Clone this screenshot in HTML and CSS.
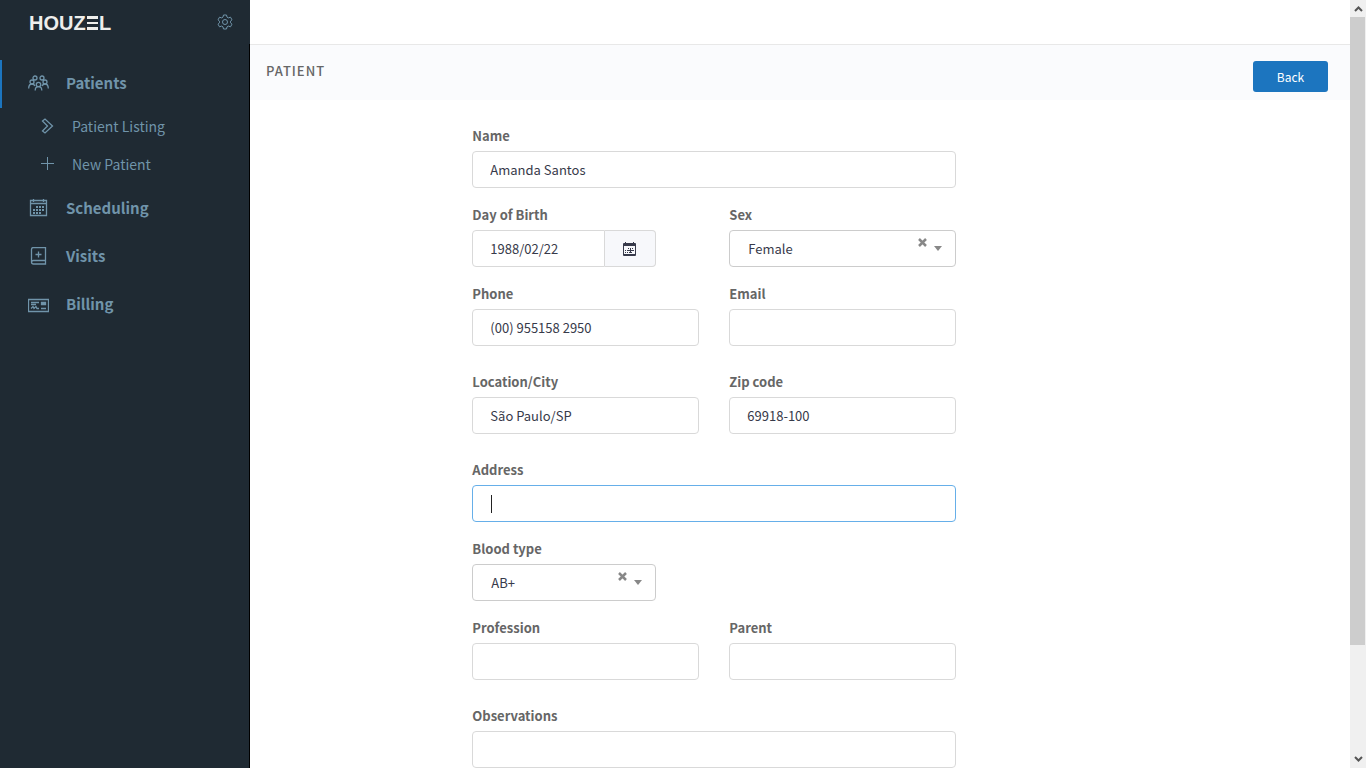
FILE: index.html
```
<!DOCTYPE html>
<html lang="en">
<head>
    <meta charset="UTF-8">
    <meta name="viewport" content="width=device-width, initial-scale=1.0">
    <title>Houzel - Patient</title>
    <link rel="stylesheet" href="styles.css">
</head>
<body>
    <aside class="sidebar">
        <div class="brand">
            <a class="logo" href="#">HOUZ<span class="bars">E</span>L</a>
            <button class="settings" type="button" aria-label="Settings">
                <svg width="16" height="16" viewBox="0 0 16 16">
                    <path d="M6.5 1h3l.5 2.1 1.400.8 2.100-.7 1.500 2.600L13.500 7.200v1.600l1.500 1.400-1.500 2.600-2.100-.7-1.400.8-.5 2.100h-3L6 12.900l-1.400-.8-2.100.7L1 10.200l1.500-1.400V7.200L1 5.800l1.500-2.600 2.100.7L6 3.100z"/>
                    <circle cx="8" cy="8" r="2.500"/>
                </svg>
            </button>
        </div>
        <nav class="menu">
            <a class="item active" href="#">
                <svg class="thick" width="21" height="16" viewBox="0 0 21 16">
                    <circle cx="7" cy="3" r="2"/>
                    <circle cx="14" cy="3" r="2"/>
                    <circle cx="4" cy="7" r="2"/>
                    <circle cx="17" cy="7" r="2"/>
                    <circle cx="10.500" cy="9.500" r="2.200"/>
                    <path d="M.7 13.500c0-3 1.200-4.500 3.300-4.500 1.500 0 2.500.8 3 2M20.300 13.500c0-3-1.200-4.500-3.300-4.500-1.500 0-2.500.8-3 2M7.200 15.500c0-2.400 1-3.800 3.300-3.800s3.300 1.400 3.300 3.800"/>
                </svg>
                Patients
            </a>
            <a class="subitem" href="#">
                <svg class="thick" width="14" height="16" viewBox="0 0 14 16">
                    <path d="M1.500 3L4 1l7.500 7L4 15l-2.500-2 5-5z"/>
                </svg>
                Patient Listing
            </a>
            <a class="subitem" href="#">
                <svg width="14" height="14" viewBox="0 0 14 14">
                    <path d="M6.500 0v13M0 6.500h13"/>
                </svg>
                New Patient
            </a>
            <a class="item" href="#">
                <svg class="thick" width="21" height="18" viewBox="0 0 21 18">
                    <path d="M2.500 1.500h16v15h-16zM2.500 4.500h16M5.500 0v3M15.500 0v3"/>
                    <path class="dots" d="M8 8h9M5 11h12M5 14h9"/>
                </svg>
                Scheduling
            </a>
            <a class="item" href="#">
                <svg class="thick" width="21" height="18" viewBox="0 0 21 18">
                    <path d="M17.500 13.500V.5H5.500Q3.500.5 3.500 2.500v12.500q0 2 2 2h12v-3.500H5.500q-2 0-2 2M10.500 4.500v6M7.500 7.500h6"/>
                </svg>
                Visits
            </a>
            <a class="item" href="#">
                <svg class="thick" width="21" height="18" viewBox="0 0 21 18">
                    <path d="M.5 4.500h20v12H.5zM3 7.500h8M3 9.500h5M3 13.500l2-2 1 2 2-2 1 2h2M13 13.500h5"/>
                    <path class="solid" d="M13.500 7.500h4v2h-4z"/>
                </svg>
                Billing
            </a>
        </nav>
    </aside>

    <main class="content">
        <div class="topbar"></div>
        <header class="page-header">
            <h1>PATIENT</h1>
            <button class="back" type="button">Back</button>
        </header>
        <form class="patient-form">
            <div class="fields">
                <div class="field full">
                    <label for="name">Name</label>
                    <input id="name" type="text" value="Amanda Santos">
                </div>

                <div class="field short">
                    <label for="birth">Day of Birth</label>
                    <div class="date">
                        <input id="birth" type="text" value="1988/02/22">
                        <button type="button" aria-label="Open calendar">
                            <svg width="14" height="14" viewBox="0 0 14 14">
                                <path d="M.5 1.500h12v12H.5zM.5 2.500h12M0 3.500h13M2.500 0v2M10.500 0v2M.5 12.500h12"/>
                                <path class="cells" d="M5 6.500h6M2 8.500h9M2 10.500h7"/>
                                <path d="M7.500 6v5M5 8.500h5"/>
                            </svg>
                        </button>
                    </div>
                </div>
                <div class="field right">
                    <label for="sex">Sex</label>
                    <div class="select">
                        <select id="sex">
                            <option>Female</option>
                            <option>Male</option>
                        </select>
                        <button class="clear" type="button" aria-label="Clear sex">
                            <svg width="9" height="9" viewBox="0 0 9 9"><path d="M1 1l7 7M8 1L1 8"/></svg>
                        </button>
                    </div>
                </div>

                <div class="field half spaced">
                    <label for="phone">Phone</label>
                    <input id="phone" type="text" value="(00) 955158 2950">
                </div>
                <div class="field right spaced">
                    <label for="email">Email</label>
                    <input id="email" type="email">
                </div>

                <div class="field half spaced">
                    <label for="city">Location/City</label>
                    <input id="city" type="text" value="São Paulo/SP">
                </div>
                <div class="field right spaced">
                    <label for="zip">Zip code</label>
                    <input id="zip" type="text" value="69918-100">
                </div>

                <div class="field full typing">
                    <label for="address">Address</label>
                    <input id="address" type="text" autofocus>
                </div>

                <div class="field short">
                    <label for="blood">Blood type</label>
                    <div class="select">
                        <select id="blood">
                            <option>AB+</option>
                            <option>AB-</option>
                            <option>O+</option>
                        </select>
                        <button class="clear" type="button" aria-label="Clear blood type">
                            <svg width="9" height="9" viewBox="0 0 9 9"><path d="M1 1l7 7M8 1L1 8"/></svg>
                        </button>
                    </div>
                </div>

                <div class="field half spaced">
                    <label for="profession">Profession</label>
                    <input id="profession" type="text">
                </div>
                <div class="field right spaced">
                    <label for="parent">Parent</label>
                    <input id="parent" type="text">
                </div>

                <div class="field full">
                    <label for="observations">Observations</label>
                    <input id="observations" type="text">
                </div>
            </div>
        </form>
    </main>

    <div class="scrollbar">
        <svg width="9" height="6" viewBox="0 0 9 6"><path d="M1 5l3.500-3.500L8 5"/></svg>
        <div class="track"><div class="thumb"></div></div>
        <svg width="9" height="6" viewBox="0 0 9 6"><path d="M1 1l3.500 3.500L8 1"/></svg>
    </div>
</body>
</html>
```
FILE: styles.css
```
* {
    box-sizing: border-box;
}

body {
    margin: 0;
    display: flex;
    height: 100vh;
    overflow: hidden;
    font-family: "Noto Sans CJK JP", "Open Sans", sans-serif;
    font-size: 14px;
    line-height: 20px;
    color: #373a4a;
    background-color: #fff;
}

svg {
    display: block;
    fill: none;
    stroke: currentColor;
    flex: none;
}

a {
    text-decoration: none;
}

button {
    padding: 0;
    border: 0;
    cursor: pointer;
    font: inherit;
}

/* sidebar */
.sidebar {
    flex: none;
    width: 250px;
    background-color: #1f2a33;
    color: #7094aa;
}

.brand {
    display: flex;
    align-items: center;
    justify-content: space-between;
    height: 44px;
    padding: 0 17px 0 29px;
}

.logo {
    font: bold 20px/24px "Liberation Sans", sans-serif;
    color: #eeeeec;
    padding-top: 2px;
}

/* the E is drawn as three bars */
.logo .bars {
    color: transparent;
    background-image: linear-gradient(#eeeeec 3px, transparent 3px 6px, #eeeeec 6px 8px, transparent 8px 11px, #eeeeec 11px);
    background-size: 11px 14px;
    background-position: 1px 4px;
    background-repeat: no-repeat;
}

.settings {
    background: none;
    color: inherit;
}

.menu {
    padding-top: 16px;
    border-right: 1px solid #000;
    height: calc(100vh - 44px);
}

.item {
    display: flex;
    align-items: center;
    gap: 17px;
    height: 48px;
    padding-left: 26px;
    border-left: 2px solid transparent;
    color: inherit;
    font-size: 15px;
    font-weight: 700;
}

.item.active {
    border-left-color: #1c75bf;
    height: 48px;
    padding-bottom: 2px;
}

.subitem {
    display: flex;
    align-items: center;
    gap: 17px;
    height: 38px;
    padding-left: 41px;
    padding-bottom: 2px;
    color: inherit;
    font-size: 14px;
}

.thick {
    stroke-width: 1.3;
}

.dots {
    stroke-width: 2;
    stroke-dasharray: 2 1;
}

.solid {
    fill: currentColor;
}

/* page */
.content {
    flex: 1;
    min-width: 0;
    overflow: hidden;
}

.topbar {
    height: 45px;
    border-bottom: 1px solid #e8e8e8;
}

.page-header {
    display: flex;
    align-items: flex-start;
    justify-content: space-between;
    height: 55px;
    padding: 16px 22px 0 16px;
    background-color: #fafbfd;
}

.page-header h1 {
    margin: 0;
    font-size: 13px;
    line-height: 20px;
    font-weight: 500;
    letter-spacing: 1px;
    color: #666;
}

.back {
    width: 75px;
    height: 31px;
    border-radius: 3px;
    background-color: #1c75bf;
    color: #fff;
    font-size: 12px;
}

.patient-form {
    display: grid;
    grid-template-columns: repeat(6, 1fr);
    padding: 26px 36px 20px;
}

.fields {
    grid-column: 2 / 5;
    display: grid;
    grid-template-columns: repeat(12, 1fr);
    column-gap: 30px;
    padding: 0 15px;
}

.field {
    margin-bottom: 17px;
}

.field.spaced {
    margin-bottom: 26px;
}

.full {
    grid-column: 1 / 13;
}

.half {
    grid-column: 1 / 7;
}

.right {
    grid-column: 7 / 13;
}

.short {
    grid-column: 1 / 6;
}

label {
    display: block;
    height: 25px;
    font-size: 13px;
    font-weight: 700;
    color: #666;
}

input, select {
    display: block;
    width: 100%;
    height: 37px;
    padding: 0 17px;
    border: 1px solid #d9d9d9;
    border-radius: 4px;
    outline: none;
    background-color: #fff;
    color: inherit;
    font: inherit;
    font-size: 13px;
}

input:focus {
    border-color: #66afe9;
    caret-color: transparent;
}

/* steady text cursor */
.typing {
    position: relative;
}

.typing:focus-within::after {
    content: "";
    position: absolute;
    left: 19px;
    bottom: 9px;
    width: 1px;
    height: 18px;
    background-color: #222;
}

select {
    appearance: none;
    border-color: #ccc;
    padding: 0 18px;
}

.date {
    display: flex;
}

.date input {
    flex: 1;
    min-width: 0;
    border-radius: 4px 0 0 4px;
}

.date button {
    display: flex;
    align-items: center;
    justify-content: center;
    width: 51px;
    border: 1px solid #d9d9d9;
    border-left: 0;
    border-radius: 0 4px 4px 0;
    background-color: #f7f8fb;
    color: inherit;
}

.cells {
    stroke-dasharray: 1 1;
}

.select {
    position: relative;
}

.select::after {
    content: "";
    position: absolute;
    right: 14px;
    top: 16px;
    border: 4px solid transparent;
    border-top: 5px solid #888;
    border-bottom: 0;
    pointer-events: none;
}

.clear {
    position: absolute;
    right: 29px;
    top: 8px;
    background: none;
    color: #888;
}

.clear path {
    stroke-width: 2.5;
}

/* window scrollbar */
.scrollbar {
    flex: none;
    display: flex;
    flex-direction: column;
    align-items: center;
    width: 16px;
    padding: 6px 0;
    gap: 5px;
    background-color: #f0f0f0;
    color: #555;
}

.scrollbar path {
    stroke-width: 2;
}

.track {
    flex: 1;
    width: 100%;
}

.thumb {
    width: 15px;
    height: 85.5%;
    background-color: #cdcdcd;
}
```
